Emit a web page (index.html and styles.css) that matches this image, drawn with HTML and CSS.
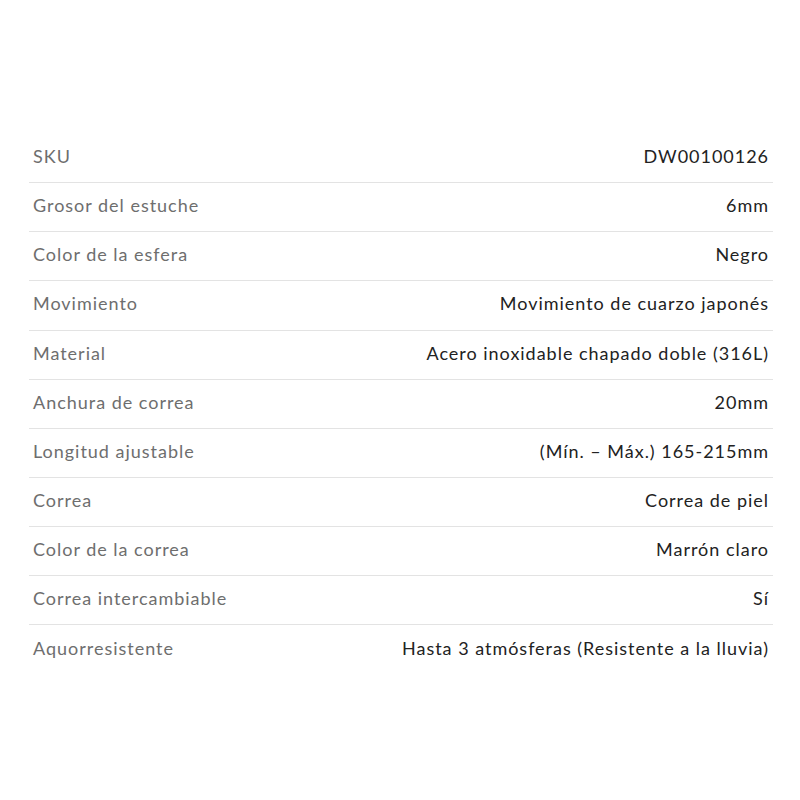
FILE: index.html
```html
<!DOCTYPE html>
<html lang="es">
<head>
<meta charset="utf-8">
<link rel="stylesheet" href="styles.css">
</head>
<body>
<div class="specs">
  <div class="row"><span class="label">SKU</span><span class="value">DW00100126</span></div>
  <div class="row"><span class="label">Grosor del estuche</span><span class="value">6mm</span></div>
  <div class="row"><span class="label">Color de la esfera</span><span class="value">Negro</span></div>
  <div class="row"><span class="label">Movimiento</span><span class="value">Movimiento de cuarzo japonés</span></div>
  <div class="row"><span class="label">Material</span><span class="value">Acero inoxidable chapado doble (316L)</span></div>
  <div class="row"><span class="label">Anchura de correa</span><span class="value">20mm</span></div>
  <div class="row"><span class="label">Longitud ajustable</span><span class="value">(Mín. – Máx.) 165-215mm</span></div>
  <div class="row"><span class="label">Correa</span><span class="value">Correa de piel</span></div>
  <div class="row"><span class="label">Color de la correa</span><span class="value">Marrón claro</span></div>
  <div class="row"><span class="label">Correa intercambiable</span><span class="value">Sí</span></div>
  <div class="row"><span class="label">Aquorresistente</span><span class="value">Hasta 3 atmósferas (Resistente a la lluvia)</span></div>
</div>
</body>
</html>
```
FILE: styles.css
```css
html, body {
  margin: 0;
  padding: 0;
  background: #fff;
}
body {
  font-family: "Lato", "Open Sans", sans-serif;
  font-size: 18px;
  letter-spacing: 0.98px;
}
.specs {
  margin: 134px 27px 0 29px;
  display: flex;
  flex-direction: column;
}
.row {
  display: flex;
  justify-content: space-between;
  align-items: center;
  padding: 0 4px 4px 4px;
  box-sizing: border-box;
  height: 49.15px;
  border-bottom: 1px solid #e3e3e3;
}
.row:last-child {
  border-bottom: none;
}
.label {
  color: #6e6e6e;
}
.value {
  color: #222;
}
```
